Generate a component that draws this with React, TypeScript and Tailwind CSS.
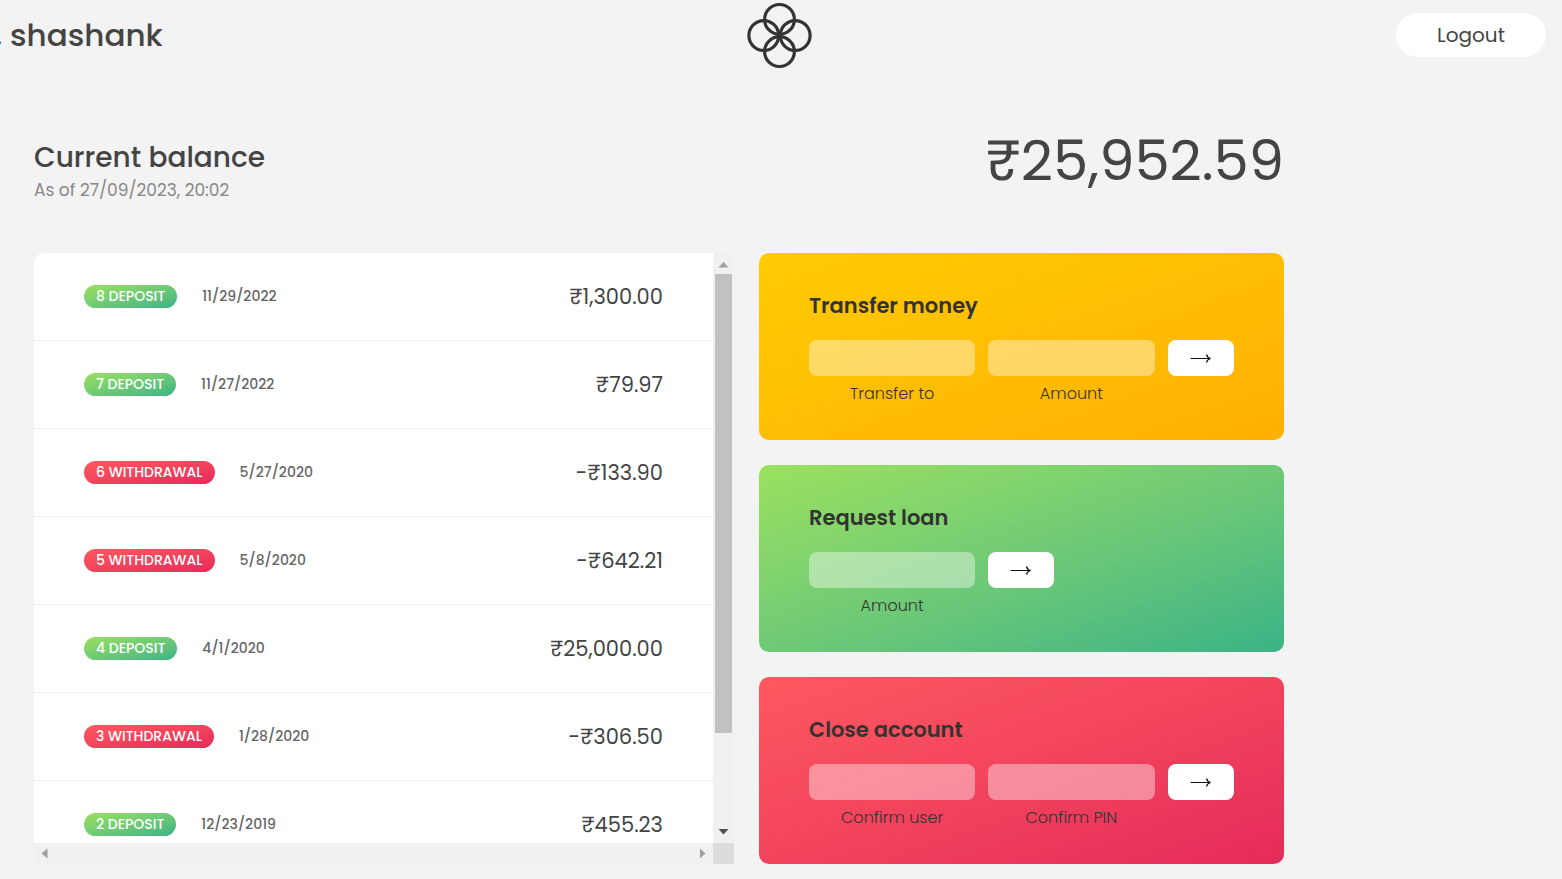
import { useId } from 'react';

type Kind = 'deposit' | 'withdrawal';

const movements: { id: number; kind: Kind; date: string; value: string }[] = [
  { id: 8, kind: 'deposit', date: '11/29/2022', value: '₹1,300.00' },
  { id: 7, kind: 'deposit', date: '11/27/2022', value: '₹79.97' },
  { id: 6, kind: 'withdrawal', date: '5/27/2020', value: '-₹133.90' },
  { id: 5, kind: 'withdrawal', date: '5/8/2020', value: '-₹642.21' },
  { id: 4, kind: 'deposit', date: '4/1/2020', value: '₹25,000.00' },
  { id: 3, kind: 'withdrawal', date: '1/28/2020', value: '-₹306.50' },
  { id: 2, kind: 'deposit', date: '12/23/2019', value: '₹455.23' },
];

const badgeColors: Record<Kind, string> = {
  deposit: 'bg-linear-to-tl from-[#39b385] to-[#9be15d]',
  withdrawal: 'bg-linear-to-tl from-[#e52a5a] to-[#ff585f]',
};

function Logo() {
  return (
    <svg className="size-[68px]" viewBox="0 0 68 68" fill="none" stroke="#333" strokeWidth="3.2" role="img" aria-label="Bank logo">
      <circle cx="32.500" cy="18.400" r="14.900" />
      <circle cx="32.500" cy="50.600" r="14.900" />
      <circle cx="16.800" cy="34.500" r="14.900" />
      <circle cx="48.200" cy="34.500" r="14.900" />
    </svg>
  );
}

function MovementRow({ id, kind, date, value }: (typeof movements)[number]) {
  return (
    <li className="flex h-[88px] shrink-0 items-center border-b border-[#eee] px-[50px]">
      <span className={`mr-[25px] rounded-full px-3 text-[14px] leading-[23px] font-medium text-white uppercase ${badgeColors[kind]}`}>
        {id} {kind}
      </span>
      <span className="text-[14px] font-medium text-[#666]">{date}</span>
      <span className="ml-auto text-[21px]">{value}</span>
    </li>
  );
}

function Movements() {
  return (
    <section className="row-span-3 flex flex-col overflow-hidden rounded-tl-[10px] bg-white">
      <div className="flex min-h-0 grow basis-0">
        <ul className="flex min-w-0 flex-1 flex-col overflow-hidden">
          {movements.map((m) => (
            <MovementRow key={m.id} {...m} />
          ))}
        </ul>
        <div className="flex w-[21px] flex-col items-center bg-[#f1f1f1]">
          <svg className="h-[21px] w-[21px] shrink-0" viewBox="0 0 21 21" fill="#a0a0a0">
            <path d="M5.5 14.5 10.5 9l5 5.500z" />
          </svg>
          <div className="w-[17px] flex-[460] bg-[#c1c1c1]" />
          <div className="flex-[89]" />
          <svg className="h-[21px] w-[21px] shrink-0" viewBox="0 0 21 21" fill="#505050">
            <path d="M5.500 7h10l-5 5.500z" />
          </svg>
        </div>
      </div>
      <div className="flex h-[21px] bg-[#f1f1f1]">
        <svg className="h-[21px] w-[21px]" viewBox="0 0 21 21" fill="#a0a0a0">
          <path d="M13.500 5.500v10L7.500 10.500z" />
        </svg>
        <div className="flex-1" />
        <svg className="h-[21px] w-[21px]" viewBox="0 0 21 21" fill="#a0a0a0">
          <path d="M8 5.500v10l5.500-5z" />
        </svg>
        <div className="w-[21px] bg-[#dcdcdc]" />
      </div>
    </section>
  );
}

function Operation({ title, fields, color }: { title: string; fields: string[]; color: string }) {
  const id = useId();
  return (
    <section className={`rounded-[10px] px-[50px] pt-[37px] pb-[34px] ${color}`}>
      <h2 className="mb-[18px] text-[21px] leading-8 font-semibold text-[#333]">{title}</h2>
      <form className="grid grid-cols-[5fr_5fr_2fr] gap-x-[13px]" onSubmit={(e) => e.preventDefault()}>
        {fields.map((field, i) => (
          <div key={field} className="flex flex-col">
            <input
              id={`${id}-${i}`}
              className="h-9 w-full rounded-lg bg-white/40 px-3 text-center text-[16px] text-[#333] outline-none"
            />
            <label htmlFor={`${id}-${i}`} className="mt-[6px] text-center text-[16px] leading-6 font-light text-[#333]">
              {field}
            </label>
          </div>
        ))}
        <button type="submit" aria-label={title} className={`flex h-9 items-center justify-center rounded-lg bg-white ${fields.length === 1 ? 'w-[66px]' : 'w-full'}`}>
          <svg className="h-3 w-6" viewBox="0 0 24 12" fill="none" stroke="#111" strokeWidth="1.2">
            <path d="M1.500 6.500H21M17.500 2.500C18 4.500 19.300 6 21.500 6.500C19.300 7 18 8.500 17.500 10.500" />
          </svg>
        </button>
      </form>
    </section>
  );
}

export default function App() {
  return (
    <div className="min-h-screen overflow-hidden bg-[#f3f3f3] pb-[14px] font-['Poppins','Inter',sans-serif] text-[#444]">
      <nav className="grid h-[70px] grid-cols-[1fr_auto_1fr] items-center">
        <p className="-ml-[5px] text-[31px] font-medium whitespace-pre">, shashank</p>
        <Logo />
        <button type="button" className="mr-4 h-11 w-[150px] justify-self-end rounded-full bg-white text-[20px]">
          Logout
        </button>
      </nav>
      <main className="ml-[34px] grid max-w-[1250px] grid-cols-[4fr_3fr] gap-[25px]">
        <header className="col-span-2 mt-[49px] mb-[25px] flex items-end justify-between">
          <div>
            <h1 className="text-[28px] leading-[38px] font-medium">Current balance</h1>
            <p className="text-[17px] leading-[26px] text-[#888]">As of 27/09/2023, 20:02</p>
          </div>
          <p className="text-[56px] leading-[84px]">₹25,952.59</p>
        </header>
        <Movements />
        <Operation title="Transfer money" fields={['Transfer to', 'Amount']} color="bg-linear-to-tl from-[#ffb003] to-[#ffcb03]" />
        <Operation title="Request loan" fields={['Amount']} color="bg-linear-to-tl from-[#39b385] to-[#9be15d]" />
        <Operation title="Close account" fields={['Confirm user', 'Confirm PIN']} color="bg-linear-to-tl from-[#e52a5a] to-[#ff585f]" />
      </main>
    </div>
  );
}
